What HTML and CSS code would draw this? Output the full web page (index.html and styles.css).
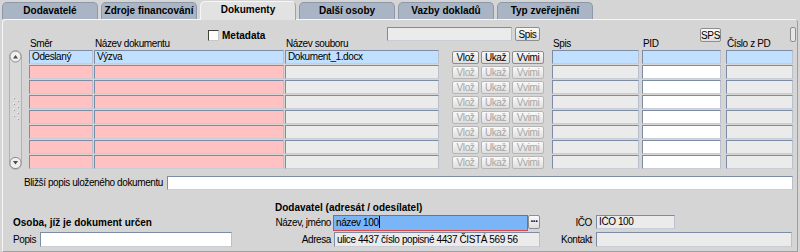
FILE: index.html
```html
<!DOCTYPE html>
<html lang="cs">
<head>
    <meta charset="UTF-8">
    <title>Dokumenty</title>
    <link rel="stylesheet" href="styles.css">
</head>
<body>
    <div class="tabs">
        <div class="tab">Dodavatelé</div>
        <div class="tab">Zdroje financování</div>
        <div class="tab active">Dokumenty</div>
        <div class="tab">Další osoby</div>
        <div class="tab">Vazby dokladů</div>
        <div class="tab">Typ zveřejnění</div>
    </div>

    <div class="panel">
        <div class="toolbar">
            <label class="meta"><span class="check"></span>Metadata</label>
            <span class="field search"></span>
            <button class="btn spis-btn">Spis</button>
            <button class="btn sps-btn">SPS</button>
            <span class="stub"></span>
        </div>

        <div class="docs">
            <div></div>
            <div class="head">Směr</div>
            <div class="head">Název dokumentu</div>
            <div class="head">Název souboru</div>
            <div></div>
            <div class="head">Spis</div>
            <div class="head">PID</div>
            <div class="head">Číslo z PD</div>

            <div class="scroll">
                <svg width="13" height="120" viewBox="0 0 13 120">
                    <rect x="0.5" y="0.5" width="12" height="119" rx="6" fill="#d9d9d9" stroke="#b2b2b2"/>
                    <circle cx="6.5" cy="6.5" r="5.5" fill="#efefef" stroke="#8c8c8c"/>
                    <path d="M4 8.5 L6.5 5 L9 8.5 Z" fill="#4a4a4a"/>
                    <rect x="1" y="107.5" width="11" height="11" rx="5" fill="#efefef" stroke="#8c8c8c"/>
                    <path d="M4 111 L9 111 L6.5 114.5 Z" fill="#4a4a4a"/>
                    <g fill="#f4f4f4">
                        <rect x="4" y="47" width="1" height="1"/><rect x="8" y="50" width="1" height="1"/>
                        <rect x="4" y="53" width="1" height="1"/><rect x="8" y="56" width="1" height="1"/>
                        <rect x="4" y="59" width="1" height="1"/><rect x="8" y="62" width="1" height="1"/>
                        <rect x="4" y="65" width="1" height="1"/><rect x="8" y="68" width="1" height="1"/>
                    </g>
                    <g fill="#9a9a9a">
                        <rect x="5" y="48" width="1" height="1"/><rect x="9" y="51" width="1" height="1"/>
                        <rect x="5" y="54" width="1" height="1"/><rect x="9" y="57" width="1" height="1"/>
                        <rect x="5" y="60" width="1" height="1"/><rect x="9" y="63" width="1" height="1"/>
                        <rect x="5" y="66" width="1" height="1"/><rect x="9" y="69" width="1" height="1"/>
                    </g>
                </svg>
            </div>

            <span class="field smer blue">Odeslaný</span>
            <span class="field nazev blue">Výzva</span>
            <span class="field soubor blue">Dokument_1.docx</span>
            <div class="actions"><button class="btn vloz">Vlož</button><button class="btn ukaz">Ukaž</button><button class="btn vvimi">Vvimi</button></div>
            <span class="field spis blue"></span>
            <span class="field pid blue"></span>
            <span class="field cislo blue"></span>

            <span class="field smer pink"></span>
            <span class="field nazev pink"></span>
            <span class="field soubor"></span>
            <div class="actions off"><button class="btn vloz">Vlož</button><button class="btn ukaz">Ukaž</button><button class="btn vvimi">Vvimi</button></div>
            <span class="field spis"></span>
            <span class="field pid white"></span>
            <span class="field cislo"></span>

            <span class="field smer pink"></span>
            <span class="field nazev pink"></span>
            <span class="field soubor"></span>
            <div class="actions off"><button class="btn vloz">Vlož</button><button class="btn ukaz">Ukaž</button><button class="btn vvimi">Vvimi</button></div>
            <span class="field spis"></span>
            <span class="field pid white"></span>
            <span class="field cislo"></span>

            <span class="field smer pink"></span>
            <span class="field nazev pink"></span>
            <span class="field soubor"></span>
            <div class="actions off"><button class="btn vloz">Vlož</button><button class="btn ukaz">Ukaž</button><button class="btn vvimi">Vvimi</button></div>
            <span class="field spis"></span>
            <span class="field pid white"></span>
            <span class="field cislo"></span>

            <span class="field smer pink"></span>
            <span class="field nazev pink"></span>
            <span class="field soubor"></span>
            <div class="actions off"><button class="btn vloz">Vlož</button><button class="btn ukaz">Ukaž</button><button class="btn vvimi">Vvimi</button></div>
            <span class="field spis"></span>
            <span class="field pid white"></span>
            <span class="field cislo"></span>

            <span class="field smer pink"></span>
            <span class="field nazev pink"></span>
            <span class="field soubor"></span>
            <div class="actions off"><button class="btn vloz">Vlož</button><button class="btn ukaz">Ukaž</button><button class="btn vvimi">Vvimi</button></div>
            <span class="field spis"></span>
            <span class="field pid white"></span>
            <span class="field cislo"></span>

            <span class="field smer pink"></span>
            <span class="field nazev pink"></span>
            <span class="field soubor"></span>
            <div class="actions off"><button class="btn vloz">Vlož</button><button class="btn ukaz">Ukaž</button><button class="btn vvimi">Vvimi</button></div>
            <span class="field spis"></span>
            <span class="field pid white"></span>
            <span class="field cislo"></span>

            <span class="field smer pink"></span>
            <span class="field nazev pink"></span>
            <span class="field soubor"></span>
            <div class="actions off"><button class="btn vloz">Vlož</button><button class="btn ukaz">Ukaž</button><button class="btn vvimi">Vvimi</button></div>
            <span class="field spis"></span>
            <span class="field pid white"></span>
            <span class="field cislo"></span>
        </div>

        <div class="note">
            <span class="note-label">Bližší popis uloženého dokumentu</span>
            <span class="field white note-input"></span>
        </div>

        <div class="bottom">
            <div></div>
            <div class="title supplier">Dodavatel (adresát / odesílatel)</div>

            <div class="title person">Osoba, jíž je dokument určen</div>
            <div class="lbl">Název, jméno</div>
            <span class="field name-input">název 100<span class="caret"></span></span>
            <button class="btn more">···</button>
            <div class="lbl lbl-r">IČO</div>
            <span class="field ico-input">IČO 100</span>

            <div class="popis"><span class="popis-label">Popis</span><span class="field white popis-input"></span></div>
            <div class="lbl">Adresa</div>
            <span class="field addr-input">ulice 4437 číslo popisné 4437 ČISTÁ 569 56</span>
            <div class="lbl lbl-r">Kontakt</div>
            <span class="field contact-input"></span>
        </div>
    </div>
</body>
</html>
```

FILE: styles.css
```css
* {
    box-sizing: border-box;
}
body {
    margin: 0;
    width: 800px;
    height: 252px;
    overflow: hidden;
    background: #d5d5d5;
    font-family: 'Liberation Sans', Arial, sans-serif;
    font-size: 10px;
    letter-spacing: -0.4px;
    color: #000;
    white-space: nowrap;
}
.tabs {
    display: flex;
    gap: 3px;
    height: 19px;
    padding: 2px 0 0 2px;
}
.tab {
    width: 96px;
    height: 17px;
    background: #a9b5c5;
    border: 1px solid #8d98a8;
    border-bottom: none;
    border-radius: 5px 5px 0 0;
    font-weight: bold;
    letter-spacing: 0;
    text-align: center;
    line-height: 16px;
}
.tab.active {
    height: 19px;
    margin-top: -1px;
    background: #e2e2e2;
    border-color: #f7f7f7 #a2a2a2 #e2e2e2 #f7f7f7;
    position: relative;
    z-index: 1;
}
.panel {
    margin-left: 2px;
    width: 796px;
    height: 233px;
    border: 1px solid #9e9e9e;
    border-top-color: #f6f6f6;
    border-left-color: #f6f6f6;
    border-radius: 4px 4px 0 0;
    background: #d5d5d5;
    padding: 7px 0 0 6px;
}

/* fields and buttons */
.field {
    display: block;
    height: 14px;
    background: #ebebeb;
    border: 1px solid;
    border-color: #7c8ca5 #b9c0cb #c9ced6 #7c8ca5;
    padding: 0 2px;
    line-height: 12px;
    overflow: hidden;
}
.field.blue { background: #c1e0ff; }
.field.pink { background: #ffc1c1; }
.field.white { background: #fff; }
.btn {
    display: block;
    height: 13px;
    padding: 0;
    border: 1px solid #8e8e8e;
    border-radius: 2px;
    background: linear-gradient(#fafafa, #dedede);
    font-family: inherit;
    font-size: 10px;
    letter-spacing: -0.4px;
    line-height: 11px;
    color: #000;
}

/* toolbar above the table */
.toolbar {
    display: flex;
    align-items: flex-start;
    height: 10px;
}
.meta {
    display: flex;
    align-items: center;
    gap: 3px;
    width: 179px;
    margin: 3px 0 0 199px;
    font-weight: bold;
    letter-spacing: 0;
    line-height: 11px;
}
.check {
    width: 11px;
    height: 11px;
    background: #fff;
    border: 1px solid;
    border-color: #404040 #c8c8c8 #c8c8c8 #404040;
}
.search {
    width: 125px;
}
.spis-btn {
    width: 25px;
    height: 14px;
    margin-left: 3px;
}
.sps-btn {
    width: 21px;
    height: 14px;
    margin: 1px 0 0 160px;
}
.stub {
    width: 6px;
    height: 15px;
    margin-left: 69px;
    border: 1px solid #8e8e8e;
    border-radius: 2px;
    background: #e6e6e6;
}

/* document table */
.docs {
    display: grid;
    grid-template-columns: 20px 65px 191px 167px 100px 90px 84px 67px;
    grid-template-rows: 13px repeat(8, 15px);
}
.head {
    line-height: 13px;
    padding-left: 1px;
}
.scroll {
    grid-column: 1;
    grid-row: 2 / 10;
    line-height: 0;
}
.smer { width: 64px; }
.nazev { width: 190px; }
.soubor { width: 154px; }
.spis { width: 87px; }
.pid { width: 79px; }
.cislo { width: 67px; }
.actions {
    display: flex;
    gap: 2px;
    padding-top: 1px;
}
.vloz { width: 27px; }
.ukaz { width: 29px; }
.vvimi { width: 32px; }
.actions.off .btn {
    color: #a6a6a6;
    border-color: #b6b6b6;
}

/* description row */
.note {
    display: flex;
    width: 784px;
    margin-top: 6px;
}
.note-label {
    width: 158px;
    padding-right: 4px;
    text-align: right;
    line-height: 14px;
}
.note-input {
    flex: 1;
}

/* supplier / person */
.bottom {
    display: grid;
    grid-template-columns: 266px 58px 195px 12px 56px 196px;
    grid-template-rows: 13px 16px 15px;
    row-gap: 1px;
    margin-top: 11px;
}
.title {
    font-weight: bold;
    letter-spacing: 0;
    line-height: 13px;
}
.supplier {
    grid-column: 2 / 7;
}
.person {
    padding-left: 4px;
    line-height: 16px;
}
.lbl {
    text-align: right;
    padding-right: 2px;
    line-height: 15px;
}
.lbl-r {
    padding-right: 4px;
}
.name-input {
    height: 16px;
    background: #79b5f7;
    border-color: #e04848;
    line-height: 14px;
}
.caret {
    display: inline-block;
    width: 1px;
    height: 12px;
    background: #000;
    vertical-align: -2px;
}
.more {
    width: 12px;
    height: 14px;
    font-weight: bold;
    line-height: 10px;
    letter-spacing: -1px;
}
.ico-input {
    width: 79px;
}
.popis {
    display: flex;
    padding-left: 4px;
}
.popis-label {
    width: 27px;
    line-height: 15px;
}
.popis-input {
    width: 192px;
    height: 15px;
}
.addr-input {
    grid-column: 3 / 5;
    height: 15px;
    margin-left: 1px;
    line-height: 13px;
}
.contact-input {
    height: 15px;
}
```
